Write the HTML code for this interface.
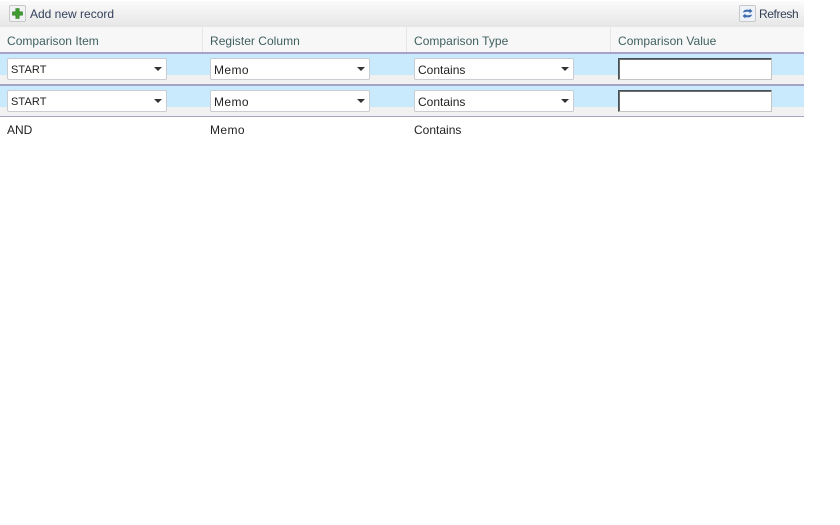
<!DOCTYPE html>
<html>
<head>
<meta charset="utf-8">
<style>
html,body{margin:0;padding:0;background:#fff;width:840px;height:525px;overflow:hidden}
body{position:relative;font-family:"Liberation Sans",sans-serif;font-size:12px;color:#222}
div{position:absolute;box-sizing:border-box}
.t{white-space:nowrap;line-height:14px}
.h{color:#3f5f5f;font-size:12px;letter-spacing:.03px;top:34px}
.sep{width:1px;top:27px;height:25px;background:#e6e6e6}
.blue{left:0;width:804px;height:22px;background:#c9e9fd}
.grey{left:0;width:804px;height:9px;background:#f1f1f1}
.line{left:0;width:804px;height:2px}
.sel{width:160px;height:22px;background:#fff;border:1px solid #c9ccd0;border-radius:2px}
.sel span{position:absolute;left:3px;top:4px;line-height:14px;font-size:12px;color:#222;white-space:nowrap}
.sel .st{left:3px;font-size:11px;letter-spacing:.1px}
.sel .me{letter-spacing:.4px}
.sel i{position:absolute;right:4px;top:8px;width:0;height:0;border-left:4px solid transparent;border-right:4px solid transparent;border-top:4px solid #333}
.inp{left:618px;width:154px;height:22px;background:#fff;border:1px solid;border-color:#4a5054 #c4c4c4 #c4c4c4 #4a5054;box-shadow:inset 1px 1px 0 #6a6f72}
.btn{width:17px;height:17px;top:5px;border:1px solid #c8c8c8;border-radius:2px;background:#f0f2f4}
</style>
</head>
<body>
<div style="left:0;top:1px;width:804px;height:26px;background:linear-gradient(#fbfbfb,#e6e6e6)"></div>
<div style="left:0;top:27px;width:804px;height:25px;background:#f7f7f7"></div>
<div class="btn" style="left:9px">
<svg width="15" height="15" viewBox="0 0 15 15" style="position:absolute;left:0;top:0"><path d="M5.800 2.500h3.400v3.300h3.300v3.400H9.200v3.300H5.800V9.200H2.500V5.800h3.300z" fill="#3f9c2f" stroke="#2c7a22" stroke-width=".6"/></svg>
</div>
<div class="t" style="left:30px;top:7px;color:#33415c">Add new record</div>
<div class="btn" style="left:739px;background:#eef3fa">
<svg width="15" height="15" viewBox="0 0 15 15" style="position:absolute;left:0;top:0"><path d="M3 6.500C3.500 4 6 3 9.500 4V2.500L12.500 5 9.500 7.500V6C7 5.500 5.500 5.800 3 6.500z" fill="#3d6cb0"/><path d="M12 8.500C11.500 11 9 12 5.500 11v1.500L2.500 10l3-2.500V9C8 9.500 9.500 9.200 12 8.500z" fill="#3d6cb0"/></svg>
</div>
<div class="t" style="left:759px;top:7px;color:#333f55;letter-spacing:-.4px">Refresh</div>

<div class="t h" style="left:7px">Comparison Item</div>
<div class="t h" style="left:210px">Register Column</div>
<div class="t h" style="left:414px">Comparison Type</div>
<div class="t h" style="left:618px">Comparison Value</div>
<div class="sep" style="left:202px"></div>
<div class="sep" style="left:406px"></div>
<div class="sep" style="left:610px"></div>

<div class="line" style="top:52px;background:#a9a3cc"></div>
<div class="blue" style="top:54px"></div>
<div class="grey" style="top:75px"></div>
<div class="line" style="top:84px;background:#a3a3c6"></div>
<div class="blue" style="top:86px"></div>
<div class="grey" style="top:107px"></div>
<div class="line" style="top:116px;height:1px;background:#a5a5bd"></div>

<div class="sel" style="left:7px;top:58px"><span class="st">START</span><i></i></div>
<div class="sel" style="left:210px;top:58px"><span class="me">Memo</span><i></i></div>
<div class="sel" style="left:414px;top:58px"><span>Contains</span><i></i></div>
<div class="inp" style="top:58px"></div>

<div class="sel" style="left:7px;top:90px"><span class="st">START</span><i></i></div>
<div class="sel" style="left:210px;top:90px"><span class="me">Memo</span><i></i></div>
<div class="sel" style="left:414px;top:90px"><span>Contains</span><i></i></div>
<div class="inp" style="top:90px"></div>

<div class="t" style="left:7px;top:123px">AND</div>
<div class="t" style="left:210px;top:123px;letter-spacing:.4px">Memo</div>
<div class="t" style="left:414px;top:123px">Contains</div>
</body>
</html>
